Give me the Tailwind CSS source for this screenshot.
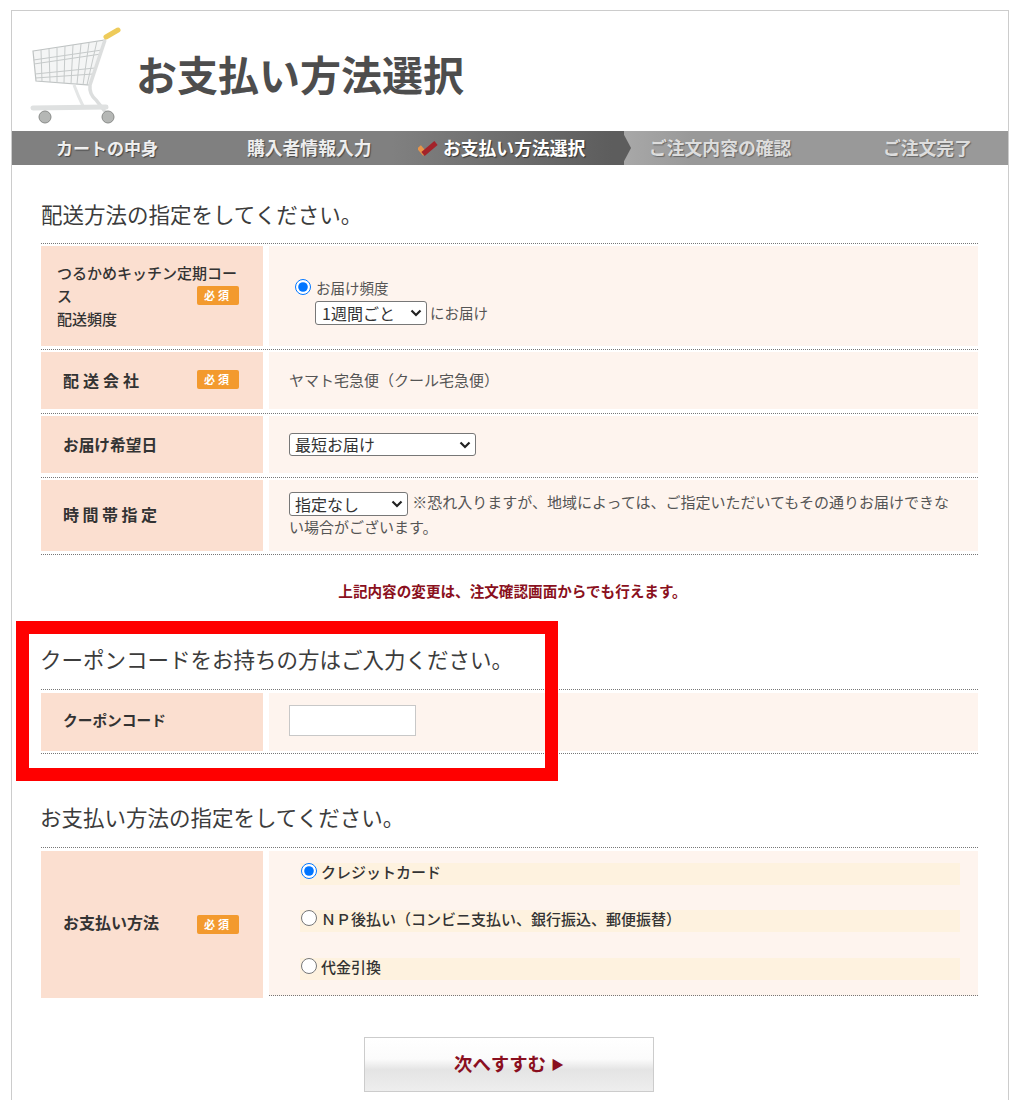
<!DOCTYPE html>
<html lang="ja">
<head>
  <meta charset="UTF-8" />
  <meta name="viewport" content="width=device-width, initial-scale=1.0" />
  <title>お支払い方法選択</title>
  <script src="https://cdn.jsdelivr.net/npm/@tailwindcss/browser@4"></script>
</head>
<body class="relative bg-white h-[1100px] overflow-hidden font-['Noto_Sans_CJK_JP','Noto_Sans',sans-serif] text-[#444]">

  <div class="ml-[11px] mt-[10px] w-[998px] h-[1090px] border-x border-t border-[#ccc]">

    <!-- ヘッダー -->
    <div class="h-[120px] flex items-center">
      <svg class="ml-[16px] mt-[5px] shrink-0" width="96" height="100" viewBox="0 0 96 100" fill="none">
        <path d="M5 27 L77 16 L62 61 L8 57 Z" fill="#f4f5f5" stroke="#bfc3c3" stroke-width="1.2"/>
        <path d="M13 26 L14 58 M21 25 L22 58 M29 24 L29 59 M37 22 L36 59 M45 21 L43 60 M53 20 L49 60 M61 19 L55 61 M69 17 L59 61 M5.5 36 L74 26 M6 40 L73 30 M7 50 L67 44 M7.5 54 L65 50" stroke="#c6caca" stroke-width="1"/>
        <path d="M77 16 L62 61 Q61 70 68 76 L79 90" stroke="#dcdede" stroke-width="3.5"/>
        <path d="M78 13 L90 6" stroke="#eecb5a" stroke-width="5" stroke-linecap="round"/>
        <path d="M46 61 Q50 72 56 84" stroke="#e4e6e6" stroke-width="3"/>
        <path d="M5 84 L78 83" stroke="#dfe1e1" stroke-width="5" stroke-linecap="round"/>
        <circle cx="17" cy="93" r="6" fill="#b5b7b5" stroke="#8a8c8a"/>
        <circle cx="80" cy="93" r="6" fill="#b5b7b5" stroke="#8a8c8a"/>
      </svg>
      <h1 class="ml-[12px] mt-[4px] text-[41px] leading-none font-bold text-[#4d4d4d]">お支払い方法選択</h1>
    </div>

    <!-- ステップ -->
    <div class="relative h-[34px] pb-px flex items-center font-bold whitespace-nowrap text-[17.8px] bg-[linear-gradient(to_right,#808080_0,#808080_380px,#5d5d5d_600px,#5d5d5d_612px,#a8a8a8_612px,#999_680px,#999_100%)]">
      <span class="ml-[44px] w-[101px] text-[17px] text-white/90 [text-shadow:1px_1px_1px_#444]">カートの中身</span>
      <span class="ml-[90px] w-[126px] text-white/90 [text-shadow:1px_1px_1px_#444]">購入者情報入力</span>
      <svg class="ml-[45px] shrink-0" width="20" height="16" viewBox="0 0 20 16" fill="none">
        <path d="M1 7 L7 14" stroke="#e8954a" stroke-width="5"/>
        <path d="M5 14 L18 3" stroke="#a3232a" stroke-width="5"/>
      </svg>
      <span class="ml-[5px] w-[145px] text-white [text-shadow:1px_1px_1px_#333]">お支払い方法選択</span>
      <span class="ml-[61px] w-[144px] text-[#ddd] [text-shadow:1px_1px_1px_#666]">ご注文内容の確認</span>
      <span class="ml-[90px] text-[#ddd] [text-shadow:1px_1px_1px_#666]">ご注文完了</span>
      <svg class="absolute left-[610px] top-0" width="10" height="34" viewBox="0 0 10 34">
        <path d="M0 0 L9 17 L0 34 Z" fill="#5d5d5d"/>
      </svg>
    </div>

    <div class="w-[937px] ml-[29px]">
      <h2 class="h-[78px] pt-[34px] text-[21.5px] leading-[30px] font-normal whitespace-nowrap text-[#3c3c3c]">配送方法の指定をしてください。</h2>

      <!-- 配送 -->
      <div class="border-b border-dotted border-[#777] text-[15px] text-[#555]">
        <div class="h-[106px] pt-[2px] border-t border-dotted border-[#777] grid grid-cols-[222px_709px] gap-x-[6px]">
          <div class="h-[100px] bg-[#fbdfd0] pl-[16px] pr-[24px] pb-[2px] flex items-center relative">
            <p class="font-medium text-[15px] leading-[23px] text-[#333]">つるかめキッチン定期コース<br />配送頻度</p>
            <span class="absolute left-[156px] top-[40px] w-[42px] h-[19px] rounded-[2px] bg-[#f39a2e] text-white text-[11px] leading-[19px] font-bold text-center tracking-[3px]">必須</span>
          </div>
          <div class="h-[100px] bg-[#fef4ee] pl-[26px] pt-[31px]">
            <div class="flex items-center h-[22px]">
              <input type="radio" name="freq" checked class="w-4 h-4 m-0 mt-[-2px]" />
              <span class="ml-[5px] text-[14.5px]">お届け頻度</span>
            </div>
            <div class="flex items-center ml-[20px] mt-[2px]">
              <div class="relative">
                <select class="block appearance-none w-[112px] h-[24px] pl-[6px] py-0 bg-white border border-[#777] rounded-[3px] text-[16px] leading-[22px] text-[#333]"><option>1週間ごと</option></select>
                <svg class="absolute right-[5px] top-[8px] pointer-events-none" width="12" height="8" viewBox="0 0 12 8" fill="none"><path d="M1.5 1.5 L6 6 L10.5 1.5" stroke="#222" stroke-width="2.2"/></svg>
              </div>
              <span class="ml-[3px] text-[14.5px]">にお届け</span>
            </div>
          </div>
        </div>

        <div class="h-[64px] pt-[2px] border-t border-dotted border-[#777] grid grid-cols-[222px_709px] gap-x-[6px]">
          <div class="h-[57px] bg-[#fbdfd0] pl-[22px] pb-[2px] flex items-center relative">
            <p class="font-bold text-[16px] tracking-[4px] text-[#333]">配送会社</p>
            <span class="absolute left-[156px] top-[18px] w-[42px] h-[19px] rounded-[2px] bg-[#f39a2e] text-white text-[11px] leading-[19px] font-bold text-center tracking-[3px]">必須</span>
          </div>
          <div class="h-[57px] bg-[#fef4ee] pl-[20px] flex items-center">ヤマト宅急便（クール宅急便）</div>
        </div>

        <div class="h-[64px] pt-[2px] border-t border-dotted border-[#777] grid grid-cols-[222px_709px] gap-x-[6px]">
          <div class="h-[57px] bg-[#fbdfd0] pl-[22px] flex items-center">
            <p class="font-bold text-[15.7px] text-[#333]">お届け希望日</p>
          </div>
          <div class="h-[57px] bg-[#fef4ee] pl-[20px] pb-[1px] flex items-center">
            <div class="relative">
              <select class="block appearance-none w-[187px] h-[23px] pl-[5px] py-0 bg-white border border-[#777] rounded-[3px] text-[16px] leading-[21px] text-[#333]"><option>最短お届け</option></select>
              <svg class="absolute right-[5px] top-[8px] pointer-events-none" width="12" height="8" viewBox="0 0 12 8" fill="none"><path d="M1.5 1.5 L6 6 L10.5 1.5" stroke="#222" stroke-width="2.2"/></svg>
            </div>
          </div>
        </div>

        <div class="h-[77px] pt-[2px] border-t border-dotted border-[#777] grid grid-cols-[222px_709px] gap-x-[6px]">
          <div class="h-[71px] bg-[#fbdfd0] pl-[22px] pb-[3px] flex items-center">
            <p class="font-bold text-[16px] tracking-[3.5px] text-[#333]">時間帯指定</p>
          </div>
          <div class="h-[71px] bg-[#fef4ee] pl-[20px] pr-[20px] pt-[11px] leading-[22px]">
            <span class="relative inline-block align-middle mr-px">
              <select class="block appearance-none w-[119px] h-[24px] pl-[5px] py-0 bg-white border border-[#777] rounded-[3px] text-[16px] leading-[22px] text-[#333]"><option>指定なし</option></select>
              <svg class="absolute right-[5px] top-[8px] pointer-events-none" width="12" height="8" viewBox="0 0 12 8" fill="none"><path d="M1.5 1.5 L6 6 L10.5 1.5" stroke="#222" stroke-width="2.2"/></svg>
            </span>
            ※恐れ入りますが、地域によっては、ご指定いただいてもその通りお届けできない場合がございます。
          </div>
        </div>
      </div>

      <p class="h-[72px] pl-[6px] flex items-center justify-center text-[14.6px] font-bold text-[#8a1020] whitespace-nowrap">上記内容の変更は、注文確認画面からでも行えます。</p>

      <h2 class="h-[62px] pt-[17px] -ml-px text-[21.5px] leading-[30px] font-normal whitespace-nowrap text-[#3c3c3c]">クーポンコードをお持ちの方はご入力ください。</h2>

      <!-- クーポン -->
      <div class="border-b border-dotted border-[#777]">
        <div class="h-[64px] pt-[3px] border-t border-dotted border-[#777] grid grid-cols-[222px_709px] gap-x-[6px]">
          <div class="h-[58px] bg-[#fbdfd0] pl-[22px] pb-[3px] flex items-center">
            <p class="font-bold text-[14.7px] text-[#333]">クーポンコード</p>
          </div>
          <div class="h-[58px] bg-[#fef4ee] pl-[20px] pb-[4px] flex items-center">
            <input type="text" class="w-[127px] h-[31px] bg-white border border-[#c8c8c8]" />
          </div>
        </div>
      </div>

      <h2 class="h-[93px] pt-[48px] -ml-px text-[21.5px] leading-[30px] font-normal whitespace-nowrap text-[#3c3c3c]">お支払い方法の指定をしてください。</h2>

      <!-- お支払い -->
      <div class="pt-[3px] border-t border-dotted border-[#777] grid grid-cols-[222px_709px] gap-x-[6px]">
        <div class="h-[147px] bg-[#fbdfd0] pl-[22px] pb-[6px] flex items-center relative">
          <p class="font-bold text-[16px] text-[#333]">お支払い方法</p>
          <span class="absolute left-[156px] top-[64px] w-[42px] h-[19px] rounded-[2px] bg-[#f39a2e] text-white text-[11px] leading-[19px] font-bold text-center tracking-[3px]">必須</span>
        </div>
        <div class="h-[145px] bg-[#fef4ee] border-b border-dotted border-[#777] pt-[12px] pl-[31px] pr-[18px] text-[15px] font-medium text-[#333]">
          <label class="h-[22px] bg-[#fef2df] flex items-center">
            <input type="radio" name="pay" checked class="w-4 h-4 m-0 ml-px mt-[-6px]" />
            <span class="ml-[4px] pb-[4px]">クレジットカード</span>
          </label>
          <label class="h-[22px] mt-[25px] bg-[#fef2df] flex items-center">
            <input type="radio" name="pay" class="w-4 h-4 m-0 ml-px mt-[-6px]" />
            <span class="ml-[4px] pb-[4px]">ＮＰ後払い（コンビニ支払い、銀行振込、郵便振替）</span>
          </label>
          <label class="h-[22px] mt-[26px] bg-[#fef2df] flex items-center">
            <input type="radio" name="pay" class="w-4 h-4 m-0 ml-px mt-[-6px]" />
            <span class="ml-[4px] pb-[4px]">代金引換</span>
          </label>
        </div>
      </div>

      <button class="flex items-center justify-center gap-[5px] mt-[39px] ml-[323px] w-[290px] h-[55px] pb-[1px] border border-[#ccc] bg-[linear-gradient(to_bottom,#fff_0,#fbfbfb_40%,#e4e4e4_60%,#eee_100%)] text-[18.4px] font-bold text-[#8a0f1f]">次へすすむ <span class="text-[13px]">▶</span></button>
    </div>
  </div>

  <!-- 赤枠 -->
  <div class="absolute left-[16px] top-[621px] w-[542px] h-[160px] border-[13px] border-[#f00]"></div>

</body>
</html>
